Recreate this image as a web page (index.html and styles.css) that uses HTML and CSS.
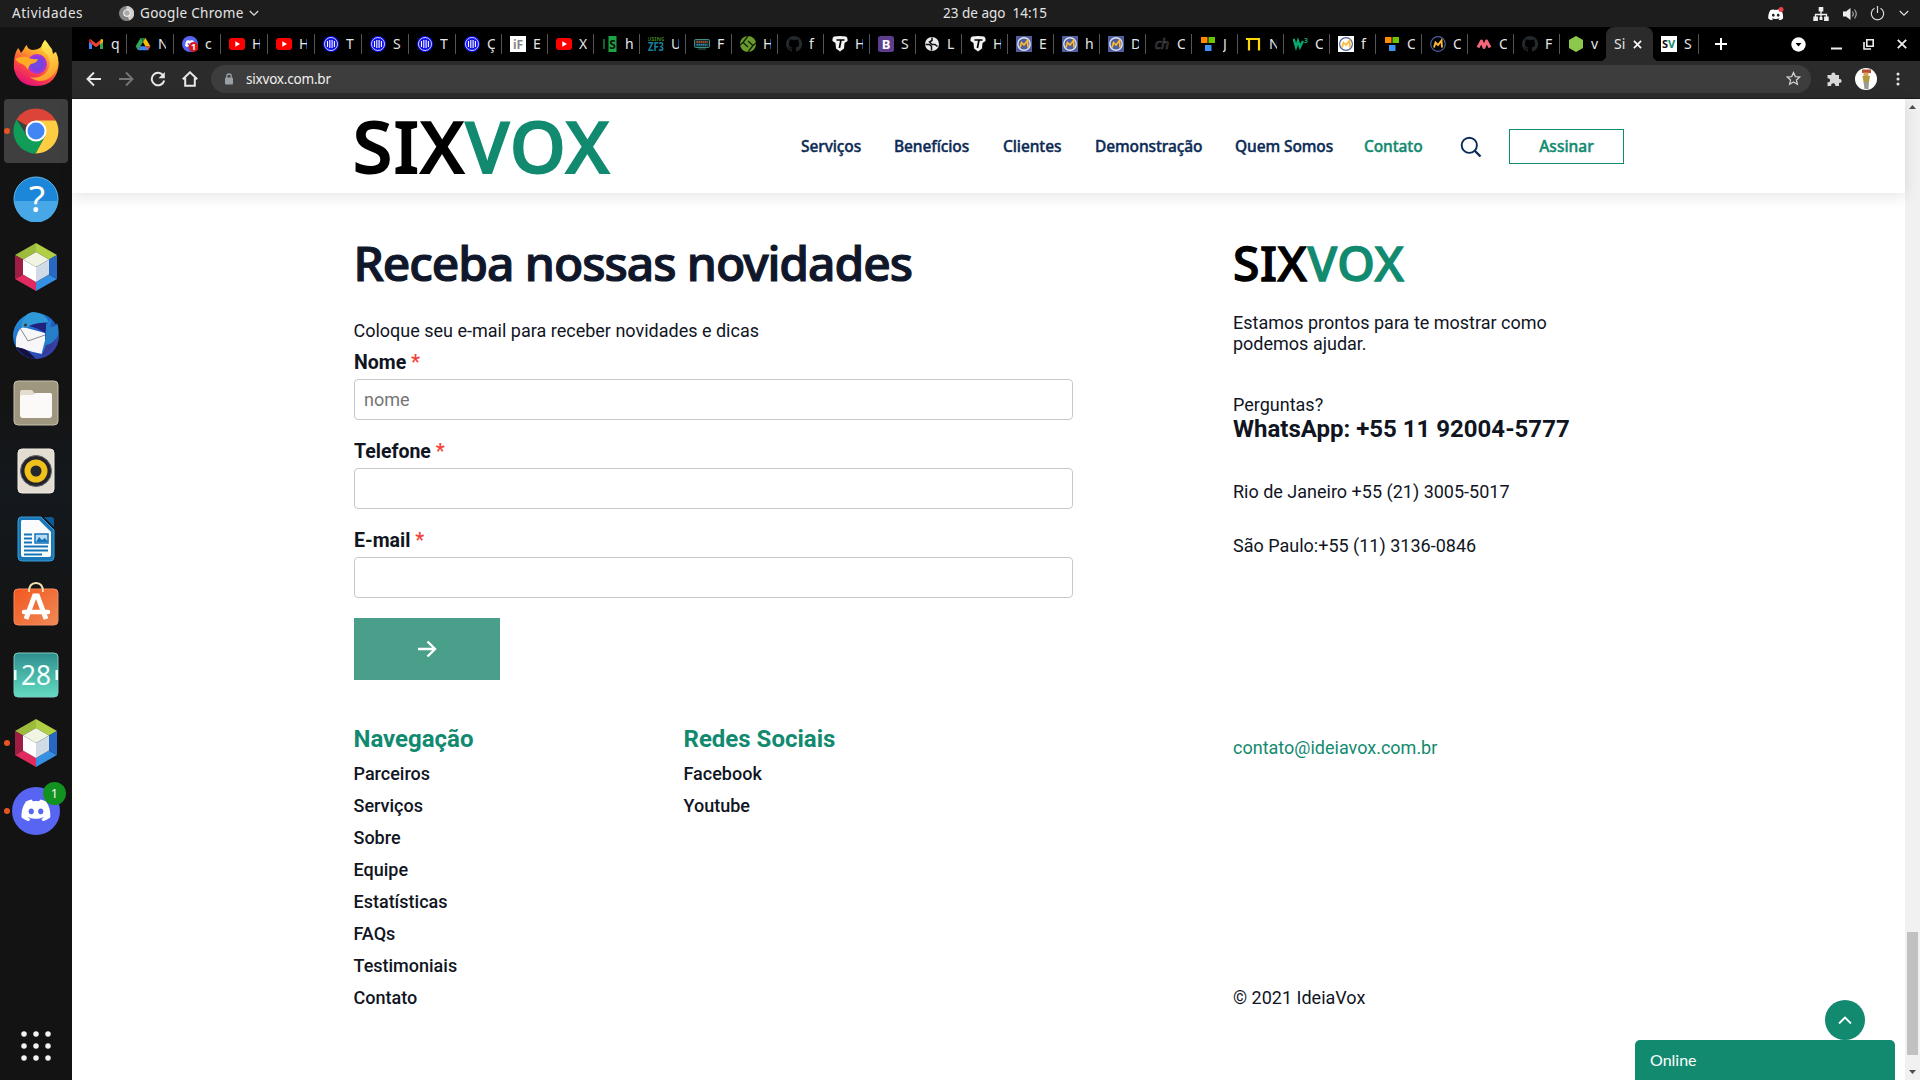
FILE: index.html
```html
<!DOCTYPE html>
<html lang="pt-BR">
<head>
<meta charset="utf-8">
<title>SIXVOX</title>
<link rel="stylesheet" href="styles.css">
</head>
<body>
<svg class="defs" width="0" height="0" aria-hidden="true">
  <defs>
    <linearGradient id="ff" x1="0.8" y1="0" x2="0.3" y2="1"><stop offset="0" stop-color="#fff44f"/><stop offset=".35" stop-color="#ffa72b"/><stop offset=".65" stop-color="#ff4b3e"/><stop offset="1" stop-color="#e20d7b"/></linearGradient>
    <linearGradient id="ffy" x1="0.5" y1="0" x2="0.7" y2="1"><stop offset="0" stop-color="#fff25a"/><stop offset="1" stop-color="#ff9a26"/></linearGradient>
    <radialGradient id="ffp"><stop offset="0" stop-color="#6a4fe0"/><stop offset=".6" stop-color="#7c3fe0"/><stop offset="1" stop-color="#b833c9"/></radialGradient>
    <linearGradient id="teal" x1="0" y1="0" x2="0" y2="1"><stop offset="0" stop-color="#2e8f8e"/><stop offset="1" stop-color="#63dbc1"/></linearGradient>
    <linearGradient id="bird" x1="0" y1="0" x2="1" y2="1"><stop offset="0" stop-color="#2a9be0"/><stop offset=".5" stop-color="#1e5fc4"/><stop offset="1" stop-color="#41309a"/></linearGradient>
    <linearGradient id="bag" x1="0" y1="0" x2="1" y2="1"><stop offset="0" stop-color="#f2571f"/><stop offset="1" stop-color="#f08a56"/></linearGradient>
  </defs>
  <symbol id="gmail" viewBox="0 0 16 16"><path d="M1 4v9h3V7z" fill="#4285f4"/><path d="M15 4v9h-3V7z" fill="#34a853"/><path d="M1 3.500V6l3 2.300V4.600L2.600 3z" fill="#c5221f"/><path d="M15 3.500V6l-3 2.300V4.600L13.400 3z" fill="#fbbc04"/><path d="M3 3.600l5 3.800 5-3.800-1 4.700-4 3-4-3z" fill="#ea4335"/></symbol>
  <symbol id="drive" viewBox="0 0 16 16"><path d="M5.500 2h5L8 6.300z" fill="#188038"/><path d="M5.500 2L0.700 10.300 3 14.300 8 6z" fill="#34a853"/><path d="M10.500 2l4.900 8.300H10.400L8 6z" fill="#fbbc04"/><path d="M5.300 10.300h10.100L13 14.300H3z" fill="#4285f4"/><path d="M10.400 10.300h5L13 14.300z" fill="#ea4335"/></symbol>
  <symbol id="discface" viewBox="0 0 24 18"><path d="M20 1.700A19 19 0 0 0 15.200.2l-.6 1.300a18 18 0 0 0-5.300 0L8.700.2A19 19 0 0 0 3.900 1.700C1 6 .1 10.300.4 14.600A19 19 0 0 0 6.300 17.600l1.300-2c-.7-.2-1.300-.5-1.900-.9l.5-.4c3.700 1.700 7.700 1.700 11.400 0l.5.4c-.6.4-1.200.7-1.900.9l1.300 2a19 19 0 0 0 5.900-3C23.800 9.600 22.700 5.400 20 1.700zM8.200 12C7 12 6.100 11 6.100 9.700S7 7.400 8.200 7.400s2.100 1 2.100 2.300S9.400 12 8.200 12zm7.600 0c-1.200 0-2.100-1-2.100-2.300s.9-2.300 2.100-2.300 2.100 1 2.100 2.300S17 12 15.800 12z" fill="#fff"/></symbol>
  <symbol id="yt" viewBox="0 0 16 16"><rect y="2" width="16" height="12" rx="3" fill="#f00"/><path d="M6.300 5.300v5.400L11 8z" fill="#fff"/></symbol>
  <symbol id="columns" viewBox="0 0 16 16"><circle cx="8" cy="8" r="8" fill="#1010e8"/><circle cx="8" cy="8" r="6.500" fill="none" stroke="#fff" stroke-width=".8"/><path d="M4.500 5v6M6.800 4v8M9.100 4v8M11.400 5v6" stroke="#fff" stroke-width="1.100"/></symbol>
  <symbol id="chip" viewBox="0 0 16 16"><rect x=".5" y="3.500" width="15" height="8" rx="1" fill="#172c2c" stroke="#3f8f80"/><path d="M2.500 6h11" stroke="#d0562e" stroke-width="1.500" stroke-dasharray="1.500 .5"/><path d="M2.500 8.800h11" stroke="#398ec0" stroke-width="1.500" stroke-dasharray="1.500 .5"/><path d="M4 13h8" stroke="#2c6a60"/></symbol>
  <symbol id="greenball" viewBox="0 0 16 16"><circle cx="8" cy="8" r="8" fill="#6a9a2c"/><path d="M8 0L3 6.500 8 11M8 16l5-6.500L8 5M0 9l3-2.500M16 7l-3 2.500" stroke="#101a08" stroke-width="1.300" fill="none"/></symbol>
  <symbol id="github" viewBox="0 0 16 16"><path fill="#24292e" d="M8 0a8 8 0 0 0-2.500 15.600c.4.100.5-.2.500-.4v-1.500c-2.200.5-2.700-.9-2.700-.9-.4-.9-.9-1.200-.9-1.200-.7-.5.100-.5.100-.5.800.1 1.200.8 1.200.8.700 1.200 1.900.9 2.300.7.100-.5.300-.9.500-1.100-1.800-.2-3.600-.9-3.600-4 0-.9.300-1.600.8-2.100-.1-.2-.4-1 .1-2.100 0 0 .7-.2 2.200.8a7.600 7.600 0 0 1 4 0c1.500-1 2.200-.8 2.200-.8.400 1.100.200 1.900.1 2.100.5.600.8 1.300.8 2.100 0 3.100-1.900 3.800-3.700 4 .3.200.6.700.6 1.500v2.200c0 .2.100.5.600.4A8 8 0 0 0 8 0z"/></symbol>
  <symbol id="tshield" viewBox="0 0 16 16"><path d="M2 .5Q8-.5 14 .5q2 1 1.500 4.500L12.500 7 12 12.500 8 15.500l-4-3L3.500 7 .5 5Q0 1.500 2 .5z" fill="#f3f3f3"/><path d="M4.500 4h8M9 4l-1.600 8" stroke="#000" stroke-width="1.700"/></symbol>
  <symbol id="globe" viewBox="0 0 16 16"><circle cx="8" cy="8" r="7" fill="#e8eaed"/><path d="M1.500 8.500h4l2 2v4M8 1.500v3L5.500 6 8 8.500h3l2.500 2" stroke="#111" stroke-width="1.500" fill="none"/></symbol>
  <symbol id="mau" viewBox="0 0 16 16"><rect width="16" height="16" fill="#4e5e9e"/><circle cx="8" cy="8" r="6.200" fill="none" stroke="#dfe3f0" stroke-width="1.400"/><path d="M4 11.500l1.500-5L8 9l3.500-4.500.5 7" stroke="#fdb933" stroke-width="1.700" fill="none"/></symbol>
  <symbol id="mauw" viewBox="0 0 16 16"><rect width="16" height="16" fill="#fff"/><circle cx="8" cy="8" r="6.400" fill="none" stroke="#4e5e9e" stroke-width="1.200"/><path d="M4 11.500l1.500-5L8 9l3.500-4.500.5 7" stroke="#fdb933" stroke-width="1.700" fill="none"/></symbol>
  <symbol id="maub" viewBox="0 0 16 16"><circle cx="8" cy="8" r="7.300" fill="none" stroke="#4e5e9e" stroke-width="1.200"/><path d="M4 11.500l1.500-5L8 9l3.500-4.500.5 7" stroke="#fdb933" stroke-width="1.900" fill="none"/></symbol>
  <symbol id="squares" viewBox="0 0 16 16"><path d="M1 1h6.500v6H1z" fill="#ff8a00"/><path d="M8.500 1H15v6H8.500z" fill="#6ec400"/><path d="M5 9h6.500v6H5z" fill="#3d94f6"/></symbol>
  <symbol id="gate" viewBox="0 0 16 16"><path d="M0 3h14M3 3v11.500M13 2v12.500" stroke="#ffd60a" stroke-width="2.200" fill="none"/></symbol>
  <symbol id="mm" viewBox="0 0 16 16"><path d="M2 11.500L5.500 5l2.500 6.500L10.500 5l3.500 6.500" stroke="#f2657a" stroke-width="3" fill="none" stroke-linejoin="round"/></symbol>
  <symbol id="hex" viewBox="0 0 16 16"><path d="M8 0l7 4v8l-7 4-7-4V4z" fill="#8cc84b"/></symbol>
  <symbol id="netbeans" viewBox="0 0 48 48"><path d="M24 0l21 12-8 4.500L24 9z" fill="#b0cf45"/><path d="M24 0L3 12l8 4.500L24 9z" fill="#9dbb3c"/><path d="M3 12l8 4.500v15L3 36z" fill="#9d1d45"/><path d="M3 36l8-4.500L24 39v9z" fill="#e02a60"/><path d="M24 48v-9l13-7.500 8 4.500z" fill="#3590e4"/><path d="M45 12v24l-8-4.500v-15z" fill="#2768c4"/><path d="M24 9l13 7.500L24 24l-13-7.500z" fill="#f0f4e2"/><path d="M11 16.500L24 24v15l-13-7.500z" fill="#fff"/><path d="M37 16.500L24 24v15l13-7.500z" fill="#d0dbe7"/></symbol>
</svg>

<div class="desktop">
  <header class="topbar">
    <span class="activities">Atividades</span>
    <div class="appmenu">
      <svg width="15" height="15" viewBox="0 0 16 16"><circle cx="8" cy="8" r="8" fill="#858585"/><path d="M8 8L8 0a8 8 0 0 1 3 15.500z" fill="#d0d0d0"/><circle cx="8.500" cy="7.500" r="3.500" fill="#aaa" stroke="#f0f0f0" stroke-width="1.200"/></svg>
      <span class="appname">Google Chrome</span>
      <svg width="10" height="7" viewBox="0 0 10 7"><path d="M.8 1l4.200 4.200L9.200 1" fill="none" stroke="#ddd" stroke-width="1.300"/></svg>
    </div>
    <span class="clock">23 de ago&nbsp; 14:15</span>
    <div class="tray">
      <svg class="tray-disc" width="17" height="14" viewBox="0 0 17 14"><use href="#discface" y="2" width="15.500" height="11.600"/><circle cx="13" cy="2.500" r="2.500" fill="#ed4245"/></svg>
      <svg width="16" height="14" viewBox="0 0 16 14"><path d="M8 3v8M2.500 11V7.500h11V11" stroke="#eee" fill="none" stroke-width="1.300"/><path d="M5.700 0h4.600v4.500H5.700zM.3 9.500h4.600V14H.3zM11.100 9.500h4.600V14h-4.600zM6.500 10h3v3h-3z" fill="#eee"/></svg>
      <svg width="15" height="14" viewBox="0 0 15 14"><path d="M0 4.500h3L7.500 1v12L3 9.500H0z" fill="#eee"/><path d="M9.300 4.500q2 2.500 0 5M11.500 2.500q3.500 4.500 0 9" stroke="#aaa" fill="none" stroke-width="1.200"/></svg>
      <svg class="power" width="15" height="15" viewBox="0 0 15 15"><path d="M4.500 2.300a6.200 6.200 0 1 0 6 0M7.500 0v7" stroke="#ddd" fill="none" stroke-width="1.200"/></svg>
      <svg width="10" height="7" viewBox="0 0 10 7"><path d="M.8 1l4.200 4.200L9.200 1" fill="none" stroke="#ddd" stroke-width="1.300"/></svg>
    </div>
  </header>

  <div class="workspace">
    <aside class="dock">
      <div class="app"><svg width="46" height="48" viewBox="0 0 46 48"><path d="M5 9q2 2 3 5l3-4q1-3 3-4 0 4 5 5 6 0 9-3Q30 3 32 1q3 6 7 9l1 5 3-2q4 8 2 17-4 17-22 17T1 30Q0 17 5 9z" fill="url(#ff)"/><path d="M32 1q-4 6-3 10 7 4 8 13-1 8-7 12-6 4-13 2 9 7 18 2 9-5 10-16 0-7-3-11l-2 3Q38 7 32 1z" fill="url(#ffy)"/><circle cx="24" cy="25" r="10" fill="url(#ffp)"/><path d="M2 20q6-3 12-2 5 3 11 2-1 4-7 5-2 1-3 6-3-6-9-7z" fill="#ffab25"/></svg></div>
      <div class="app active running"><svg width="46" height="46" viewBox="0 0 46 46"><path d="M23 23L3.500 11.500A22.500 22.500 0 0 1 42.500 12z" fill="#dc4437"/><path d="M23 12.500h19.800A22.500 22.500 0 0 1 22.500 45.500L32 28z" fill="#ffcd42"/><path d="M3.600 11.500A22.500 22.500 0 0 0 22.500 45.500L32 28.500 14 28z" fill="#0f9d58"/><circle cx="23" cy="23" r="10.500" fill="#fff"/><circle cx="23" cy="23" r="8.500" fill="#4285f4"/></svg></div>
      <div class="app"><svg width="46" height="46" viewBox="0 0 46 46"><circle cx="23" cy="23" r="22" fill="#1c86d8" stroke="#62b7ee"/><path d="M1.500 25h43a21.500 21.500 0 0 1-43 0z" fill="#48a7e6"/><text x="24" y="36" font-size="37" fill="#fff" text-anchor="middle">?</text></svg></div>
      <div class="app"><svg width="48" height="48"><use href="#netbeans"/></svg></div>
      <div class="app"><svg width="48" height="48" viewBox="0 0 48 48"><circle cx="24" cy="25" r="23" fill="url(#bird)"/><path d="M4 36q-1-12 4-18l3-2 22 6v11l-3 10-9-2z" fill="#f7f7fa"/><path d="M8 17l8 13 17-6" fill="none" stroke="#888" stroke-width="1"/><path d="M9 15Q12 1 22 1q11 1 15 10-12 1-19 4-6 4-9 0z" fill="#2e9bd8"/><path d="M17 15q10-4 18-3l-2 10q-7-5-16-7z" fill="#23217e"/><path d="M34 13q4-2 5-6 1 5-1 9 6 0 7-4 3 8 0 15-2 9-10 14l-6 4 3-12q3-8 2-20z" fill="#267fc9"/><path d="M34 34q7-1 11-8-2 10-9 15l-7 5z" fill="#353a9c"/><path d="M4 36q8 1 12 4l5 5 3 3Q11 47 4 36z" fill="#150f43"/><circle cx="13.500" cy="14" r="1.500" fill="#4a2c20"/></svg></div>
      <div class="app"><svg width="46" height="46" viewBox="0 0 46 46"><rect x="1" y="1" width="44" height="44" rx="4" fill="#9f967f" stroke="#c8c1ad"/><path d="M7 12q0-2 2-2h9q2 0 3 3h16q2 0 2 2v10H7z" fill="#e2ddd0"/><path d="M7 17q0-2 2-2h11l3-2h14q2 0 2 2v20q0 3-3 3H10q-3 0-3-3z" fill="#fbfaf8"/></svg></div>
      <div class="app"><svg width="38" height="46" viewBox="0 0 38 46"><rect x="1" y="1" width="36" height="44" rx="4" fill="#e3ddd1" stroke="#f0ece4"/><circle cx="19" cy="23" r="15.500" fill="#23242b" stroke="#66676d"/><circle cx="19" cy="23" r="11.500" fill="#f0c01b"/><circle cx="19" cy="23" r="5.500" fill="#25282c"/></svg></div>
      <div class="app"><svg width="38" height="46" viewBox="0 0 38 46"><path d="M4 1h20l13 13v27q0 4-4 4H5q-4 0-4-4V5q0-4 3-4z" fill="#1878b8" stroke="#3b9bd6"/><path d="M5 4h17l12 12v23q0 2-2 2H6q-2 0-2-2V6q0-2 1-2z" fill="#fbfbfb"/><path d="M27 1h7q3 0 3 3v7z" fill="#0c5c93"/><path d="M7 18.500h8M7 22.500h8M7 26.500h8M7 30.500h24M7 34.500h24M7 38.500h18" stroke="#1474b8" stroke-width="2"/><rect x="18" y="18" width="13" height="9" fill="#b7dcf2" stroke="#1474b8" stroke-width="1.500"/><path d="M19 26l3-5 3 3 3-2 3 4z" fill="#1474b8"/></svg></div>
      <div class="app bag"><svg width="46" height="46" viewBox="0 0 46 46"><rect x="1" y="7" width="44" height="36" rx="4" fill="url(#bag)" stroke="#f58a60"/><path d="M16 10q0-9 7-9t7 9" fill="none" stroke="#f4dfae" stroke-width="2"/><path d="M13 37L21.500 14h3l8.500 23" fill="none" stroke="#fff" stroke-width="5"/><path d="M11 30h24" stroke="#fff" stroke-width="4.500" stroke-linecap="round"/></svg></div>
      <div class="app"><svg width="46" height="46" viewBox="0 0 46 46"><rect x="1" y="1" width="44" height="44" rx="4" fill="url(#teal)" stroke="#7cc9bf"/><path d="M1 18h2.500v10H1zM42.500 18H45v10h-2.500z" fill="#e8fffa"/><text x="23" y="33" font-size="28" fill="#f3fffc" text-anchor="middle" textLength="30" lengthAdjust="spacingAndGlyphs">28</text></svg></div>
      <div class="app running"><svg width="48" height="48"><use href="#netbeans"/></svg></div>
      <div class="app running"><svg width="48" height="48" viewBox="0 0 48 48"><circle cx="24" cy="24" r="24" fill="#5865f2"/><use href="#discface" x="9" y="12" width="30" height="23"/></svg><span class="badge">1</span></div>
      <svg class="grid" width="30" height="30" viewBox="0 0 30 30"><path d="M3 3h.01M15 3h.01M27 3h.01M3 15h.01M15 15h.01M27 15h.01M3 27h.01M15 27h.01M27 27h.01" stroke="#f2f2f2" stroke-width="5.500" stroke-linecap="round"/></svg>
    </aside>

    <div class="browser">
      <div class="tabstrip">
        <div class="tab wide"><svg><use href="#gmail"/></svg><span>q</span></div>
        <div class="tab wide"><svg><use href="#drive"/></svg><span>N</span></div>
        <div class="tab wide"><svg viewBox="0 0 16 16"><circle cx="8" cy="8" r="8" fill="#5865f2"/><use href="#discface" x="3" y="4" width="10" height="7.500"/><circle cx="11.500" cy="11" r="5" fill="#d8191f"/><text x="11.500" y="14.300" font-size="9" font-weight="700" fill="#fff" text-anchor="middle">1</text></svg><span>c</span></div>
        <div class="tab wide"><svg><use href="#yt"/></svg><span>H</span></div>
        <div class="tab wide"><svg><use href="#yt"/></svg><span>H</span></div>
        <div class="tab wide"><svg><use href="#columns"/></svg><span>T</span></div>
        <div class="tab wide"><svg><use href="#columns"/></svg><span>S</span></div>
        <div class="tab wide"><svg><use href="#columns"/></svg><span>T</span></div>
        <div class="tab"><svg><use href="#columns"/></svg><span>Ç</span></div>
        <div class="tab"><svg viewBox="0 0 16 16"><rect width="16" height="16" fill="#fff"/><text x="8" y="12.500" font-size="12" font-weight="700" fill="#888" text-anchor="middle">iF</text></svg><span>E</span></div>
        <div class="tab"><svg><use href="#yt"/></svg><span>X</span></div>
        <div class="tab"><svg viewBox="0 0 16 16"><path d="M2 3v10" stroke="#16843a" stroke-width="1.500"/><rect x="6.500" width="8" height="16" fill="#1ea446"/><text x="10.500" y="13" font-size="12" font-weight="700" fill="#111" text-anchor="middle">S</text></svg><span>h</span></div>
        <div class="tab"><svg viewBox="0 0 16 16"><text x="8" y="4.800" font-size="5.500" font-weight="700" fill="#3f7d1b" text-anchor="middle">USING</text><text x="8" y="15.300" font-size="13" font-weight="700" fill="#16809f" text-anchor="middle" textLength="16" lengthAdjust="spacingAndGlyphs">ZF3</text></svg><span>U</span></div>
        <div class="tab"><svg><use href="#chip"/></svg><span>F</span></div>
        <div class="tab"><svg><use href="#greenball"/></svg><span>H</span></div>
        <div class="tab"><svg><use href="#github"/></svg><span>f</span></div>
        <div class="tab"><svg><use href="#tshield"/></svg><span>H</span></div>
        <div class="tab"><svg viewBox="0 0 16 16"><rect width="16" height="16" rx="2.500" fill="#5d3d8c"/><text x="8" y="12.700" font-size="13" font-weight="700" fill="#fff" text-anchor="middle">B</text></svg><span>S</span></div>
        <div class="tab"><svg><use href="#globe"/></svg><span>L</span></div>
        <div class="tab"><svg><use href="#tshield"/></svg><span>H</span></div>
        <div class="tab"><svg><use href="#mau"/></svg><span>E</span></div>
        <div class="tab"><svg><use href="#mau"/></svg><span>h</span></div>
        <div class="tab"><svg><use href="#mau"/></svg><span>D</span></div>
        <div class="tab"><svg viewBox="0 0 16 16"><text x="8" y="13" font-size="14" font-style="italic" fill="none" stroke="#484848" stroke-width=".7" text-anchor="middle">ch</text></svg><span>C</span></div>
        <div class="tab"><svg><use href="#squares"/></svg><span>J</span></div>
        <div class="tab"><svg><use href="#gate"/></svg><span>N</span></div>
        <div class="tab"><svg viewBox="0 0 16 16"><path d="M1 4h1l2 7 2-6 2 6 3-6" stroke="#04aa6d" stroke-width="2.400" fill="none"/><text x="12" y="7" font-size="7" font-weight="700" fill="#04aa6d">3</text></svg><span>C</span></div>
        <div class="tab"><svg><use href="#mauw"/></svg><span>f</span></div>
        <div class="tab"><svg><use href="#squares"/></svg><span>C</span></div>
        <div class="tab"><svg><use href="#maub"/></svg><span>C</span></div>
        <div class="tab"><svg><use href="#mm"/></svg><span>C</span></div>
        <div class="tab"><svg><use href="#github"/></svg><span>F</span></div>
        <div class="tab last"><svg><use href="#hex"/></svg><span>v</span></div>
        <div class="tab current"><span>Si</span><svg class="close" viewBox="0 0 10 10"><path d="M1 1l8 8M9 1L1 9" stroke="#fff" stroke-width="1.800"/></svg></div>
        <div class="tab"><svg viewBox="0 0 16 16"><rect width="16" height="16" fill="#fff"/><text x="1" y="12.300" font-size="11" font-weight="700" fill="#111">S<tspan fill="#118a70">V</tspan></text></svg><span>S</span></div>
        <svg class="plus" viewBox="0 0 12 12"><path d="M6 0v12M0 6h12" stroke="#fff" stroke-width="2"/></svg>
        <div class="winbtns">
          <svg width="15" height="15" viewBox="0 0 15 15"><circle cx="7.500" cy="7.500" r="7.200" fill="#fff"/><path d="M4.500 6h6l-3 3.500z" fill="#000"/></svg>
          <svg width="11" height="15" viewBox="0 0 11 15"><path d="M0 11.500h11" stroke="#eee" stroke-width="2"/></svg>
          <svg width="11" height="11" viewBox="0 0 11 11"><path d="M3.800.8h6.400v6.400H3.800zM1 3v7h7" fill="none" stroke="#eee" stroke-width="1.600"/></svg>
          <svg width="10" height="10" viewBox="0 0 10 10"><path d="M.8.8l8.400 8.400M9.200.8L.8 9.200" stroke="#eee" stroke-width="1.800"/></svg>
        </div>
      </div>

      <div class="toolbar">
        <svg width="16" height="16" viewBox="0 0 16 16"><path d="M15 8H2M8 1.500L1.500 8 8 14.500" fill="none" stroke="#e8e8e8" stroke-width="1.900"/></svg>
        <svg width="16" height="16" viewBox="0 0 16 16"><path d="M1 8h13M8 1.500L14.500 8 8 14.500" fill="none" stroke="#757575" stroke-width="1.900"/></svg>
        <svg width="16" height="16" viewBox="0 0 16 16"><path d="M13.300 4.500A6.300 6.300 0 1 0 14.200 9.500" fill="none" stroke="#e8e8e8" stroke-width="2"/><path d="M14.800 1v6.300H8.500z" fill="#e8e8e8"/></svg>
        <svg width="18" height="16" viewBox="0 0 18 16"><path d="M1.800 8.200L9 1.300l7.200 6.900M4.200 7v7.800h9.600V7" fill="none" stroke="#e8e8e8" stroke-width="2"/></svg>
        <div class="omnibox">
          <svg width="10" height="12" viewBox="0 0 10 12"><rect x="1" y="4.500" width="8" height="7" rx="1" fill="#9aa0a6"/><path d="M2.800 5V3.200a2.200 2.200 0 0 1 4.400 0V5" fill="none" stroke="#9aa0a6" stroke-width="1.300"/></svg>
          <span class="url">sixvox.com.br</span>
          <svg width="15" height="15" viewBox="0 0 24 24"><path d="M12 2.500l2.900 6.400 7 .7-5.200 4.700 1.500 6.900L12 17.600l-6.200 3.600 1.500-6.900L2.100 9.600l7-.7z" fill="none" stroke="#d0d0d0" stroke-width="2"/></svg>
        </div>
        <svg class="ext" width="16" height="16" viewBox="0 0 16 16"><path d="M1.500 4h4a2 2 0 1 1 3.800 0H13v4a2 2 0 1 1 0 3.800V15H9.200a2.100 2.100 0 1 0-4 0H1.500v-3.800a2 2 0 1 0 0-3.800z" fill="#d8d8d8"/></svg>
        <svg width="22" height="22" viewBox="0 0 22 22"><circle cx="11" cy="11" r="11" fill="#fff"/><path d="M7 1.500h9V5H7z" fill="#b5522e"/><path d="M8.500 4.500h5V8h-5z" fill="#d9a060"/><path d="M7.500 8h7.500l-1 6H8.500z" fill="#b09c3d"/><path d="M8.500 14H14l-.5 7h-4z" fill="#9a9a94"/></svg>
        <svg class="dots" width="4" height="14" viewBox="0 0 4 14"><path d="M2 2h.01M2 7h.01M2 12h.01" stroke="#e8e8e8" stroke-width="3" stroke-linecap="round"/></svg>
      </div>

      <div class="viewport">
        <div class="site">
          <div class="sitehead">
            <div class="logo">SIX<span>VOX</span></div>
            <nav class="menu">
              <a class="m1">Serviços</a><a class="m2">Benefícios</a><a class="m3">Clientes</a><a class="m4">Demonstração</a><a class="m5">Quem Somos</a><a class="m6 on">Contato</a>
            </nav>
            <svg class="search" width="22" height="22" viewBox="0 0 22 22"><circle cx="9.300" cy="9.300" r="7.600" fill="none" stroke="#0b2a55" stroke-width="1.900"/><path d="M14.500 14.500l6 6" stroke="#0b2a55" stroke-width="2.400"/></svg>
            <a class="subscribe">Assinar</a>
          </div>

          <main class="content">
            <section class="news">
              <h1>Receba nossas novidades</h1>
              <p class="lead">Coloque seu e-mail para receber novidades e dicas</p>
              <form>
                <label>Nome <i>*</i></label>
                <input type="text" placeholder="nome">
                <label>Telefone <i>*</i></label>
                <input type="text">
                <label>E-mail <i>*</i></label>
                <input type="text">
                <button type="button" aria-label="Enviar"><svg width="20" height="18" viewBox="0 0 20 18"><path d="M1 9h17M10.500 1.500L18 9l-7.500 7.500" fill="none" stroke="#fff" stroke-width="2.400"/></svg></button>
              </form>
              <div class="links">
                <div><h2>Navegação</h2><ul><li>Parceiros</li><li>Serviços</li><li>Sobre</li><li>Equipe</li><li>Estatísticas</li><li>FAQs</li><li>Testimoniais</li><li>Contato</li></ul></div>
                <div><h2>Redes Sociais</h2><ul><li>Facebook</li><li>Youtube</li></ul></div>
              </div>
            </section>
            <section class="info">
              <div class="logo small">SIX<span>VOX</span></div>
              <p class="ready">Estamos prontos para te mostrar como podemos ajudar.</p>
              <p class="ask">Perguntas?</p>
              <p class="whats">WhatsApp: +55 11 92004-5777</p>
              <p class="rio">Rio de Janeiro +55 (21) 3005-5017</p>
              <p class="sp">São Paulo:+55 (11) 3136-0846</p>
              <p class="mail">contato@ideiavox.com.br</p>
              <p class="copy">© 2021 IdeiaVox</p>
            </section>
          </main>
          <div class="totop"><svg width="14" height="9" viewBox="0 0 14 9"><path d="M1 7.500l6-6 6 6" fill="none" stroke="#fff" stroke-width="1.800"/></svg></div>
          <div class="chat">Online</div>
        </div>
        <div class="scrollbar">
          <svg width="7" height="4" viewBox="0 0 7 4"><path d="M0 4l3.500-4L7 4z" fill="#505050"/></svg>
          <div class="thumb"></div>
          <svg width="7" height="4" viewBox="0 0 7 4"><path d="M0 0l3.500 4L7 0z" fill="#505050"/></svg>
        </div>
      </div>
    </div>
  </div>
</div>
</body>
</html>
```
FILE: styles.css
```css
* { box-sizing: border-box; }
body, h1, h2, p, ul { margin: 0; padding: 0; }
body { width: 1920px; height: 1080px; overflow: hidden; font-family: Roboto, "Liberation Sans", sans-serif; color: #10151f; }
.defs { position: absolute; }
svg { display: block; flex: none; }
svg text { font-family: "Noto Sans", sans-serif; }
.desktop { display: flex; flex-direction: column; height: 1080px; background: #131313; }

/* system bar */
.topbar { display: flex; align-items: center; height: 27px; background: #1d1d1d; color: #e4e4e4; font: 13.500px/27px "Noto Sans", sans-serif; white-space: nowrap; }
.activities { width: 107px; padding-left: 12px; letter-spacing: .55px; }
.appmenu { display: flex; align-items: center; width: 836px; padding-left: 12px; }
.appname { width: 104px; margin: 0 5px 0 6px; letter-spacing: .3px; }
.clock { width: 825px; }
.tray { display: flex; align-items: center; gap: 14px; }
.tray-disc { margin-right: 14px; }
.power { margin-left: -2px; }

/* launcher */
.workspace { display: flex; flex: 1; min-height: 0; }
.dock { display: flex; flex-direction: column; align-items: center; gap: 4px; width: 72px; padding: 4px 0 19px; background: linear-gradient(#131313 35%, #14191e 44%, #131313 58%); }
.app { position: relative; display: flex; align-items: center; justify-content: center; flex: none; width: 64px; height: 64px; border-radius: 4px; }
.app.active { background: #3f3f3f; }
.app.bag { padding-bottom: 4px; }
.app.running::before { content: ""; position: absolute; left: 0; top: 29px; width: 6px; height: 6px; border-radius: 50%; background: #e95420; }
.badge { position: absolute; left: 39px; top: 3px; width: 23px; height: 23px; border-radius: 50%; background: #12921f; color: #fff; font: 12px/23px "Noto Sans", sans-serif; text-align: center; }
.grid { margin-top: auto; }

/* browser chrome */
.browser { display: flex; flex-direction: column; flex: 1; min-width: 0; }
.tabstrip { display: flex; align-items: center; height: 34px; padding-left: 8px; background: #000; color: #e6e6e6; font: 14px/20px "Noto Sans", sans-serif; }
.tab { display: flex; align-items: center; gap: 7px; flex: none; width: 46px; height: 20px; padding-left: 8px; border-right: 1px solid #555; }
.tab.wide { width: 47px; }
.tab svg { width: 16px; height: 16px; overflow: hidden; }
.tab span { width: 8px; overflow: hidden; }
.tab.last { border-right-color: transparent; }
.tab.current { position: relative; width: 47px; height: 34px; gap: 6px; border: 0; border-radius: 8px 8px 0 0; background: #2b2b2b; }
.tab.current::before, .tab.current::after { content: ""; position: absolute; bottom: 0; width: 6px; height: 6px; }
.tab.current::before { left: -6px; background: radial-gradient(circle at 0 0, transparent 6px, #2b2b2b 6.500px); }
.tab.current::after { right: -6px; background: radial-gradient(circle at 100% 0, transparent 6px, #2b2b2b 6.500px); }
.tab.current span { width: 13px; }
.tab.current svg { width: 9px; height: 9px; }
.plus { width: 12px; height: 12px; margin-left: 16px; }
.winbtns { display: flex; align-items: center; margin-left: auto; padding-right: 13px; }
.winbtns svg:nth-child(1) { margin-right: 25px; }
.winbtns svg:nth-child(2) { margin-right: 21px; }
.winbtns svg:nth-child(3) { margin-right: 23px; }
.toolbar { display: flex; align-items: center; gap: 16px; height: 38px; padding: 0 0 2px 14px; border-bottom: 1px solid #1c1c1c; background: #2b2b2b; }
.toolbar > svg:nth-child(4) { margin-left: -1px; }
.omnibox { display: flex; align-items: center; width: 1600px; height: 28px; margin-left: -4px; padding: 0 10px 0 13px; border-radius: 14px; background: #3d3d3d; }
.url { flex: 1; margin-left: 12px; color: #f0f0f0; font: 13.500px/28px "Noto Sans", sans-serif; letter-spacing: -.2px; }
.ext { margin: 0 -3px 0 -1px; }
.dots { margin-left: 3px; }

/* page */
.viewport { display: flex; flex: 1; min-height: 0; }
.site { position: relative; flex: 1; background: #fff; }
.sitehead { display: flex; align-items: center; height: 94px; padding-left: 281px; box-shadow: 0 3px 14px rgba(0,0,0,.11); font-family: "Noto Sans", sans-serif; }
.logo { width: 448px; padding-bottom: 1px; color: #000; font: 500 71px/93px "Noto Sans", sans-serif; letter-spacing: 1.600px; -webkit-text-stroke: 2px; }
.logo span { color: #118a70; }
.menu { display: flex; color: #0b2a55; font-size: 15.500px; font-weight: 500; letter-spacing: -.1px; white-space: nowrap; -webkit-text-stroke: .4px; }
.m1 { width: 93px; } .m2 { width: 109px; } .m3 { width: 92px; } .m4 { width: 140px; } .m5 { width: 129px; } .m6 { width: 96px; }
.on { color: #118a70; }
.search { margin: 1px 27px 0 0; }
.subscribe { width: 115px; height: 35px; border: 1px solid #118a70; color: #118a70; font-size: 15.500px; font-weight: 500; line-height: 32px; text-align: center; -webkit-text-stroke: .4px; }

.content { display: flex; padding: 31px 0 0 281.500px; }
.news { width: 880px; }
h1 { color: #10172a; font: 500 48px/78px "Noto Sans", sans-serif; letter-spacing: -1.050px; white-space: nowrap; -webkit-text-stroke: 1.200px; }
.lead { margin-top: 18px; font-size: 18px; line-height: 21px; }
form { display: flex; flex-direction: column; width: 719px; margin-left: .5px; }
label { height: 38px; padding-top: 10px; font-size: 19.500px; font-weight: 700; line-height: 24px; }
label i { color: #f44336; font-style: normal; }
input { height: 41px; margin-bottom: 10px; padding: 0 9px; border: 1px solid #c8c8c8; border-radius: 4px; font: 18px Roboto, sans-serif; outline: none; }
input::placeholder { color: #757575; }
button { display: flex; align-items: center; justify-content: center; width: 146px; height: 62px; margin-top: 10px; padding: 0; border: 0; background: #499f8a; }
.links { display: flex; margin-top: 44px; }
.links > div { width: 330px; }
h2 { color: #118a70; font-size: 24px; font-weight: 700; line-height: 30px; }
ul { padding-top: 4px; list-style: none; font-size: 18px; font-weight: 500; line-height: 32px; }
.info { width: 420px; margin-left: -.5px; font-size: 18px; line-height: 21px; }
.logo.small { width: auto; padding: 0; font-size: 48px; line-height: 78px; letter-spacing: .600px; -webkit-text-stroke: 1.300px; }
.ready { width: 330px; margin-top: 10px; }
.ask { margin-top: 40px; }
.whats { font-size: 24px; font-weight: 700; line-height: 28px; }
.rio { margin-top: 38px; }
.sp { margin-top: 33px; }
.mail { margin-top: 181px; color: #118a70; }
.copy { margin-top: 229px; }
.totop { position: absolute; left: 1753px; bottom: 40px; display: flex; align-items: center; justify-content: center; width: 40px; height: 40px; border-radius: 50%; background: #118a70; }
.chat { position: absolute; left: 1563px; bottom: 0; width: 260px; height: 40px; padding-left: 15px; border-radius: 5px 5px 0 0; background: #118a70; color: #fff; font: 16px/40px Lato, sans-serif; }
.scrollbar { display: flex; flex-direction: column; align-items: center; width: 15px; padding: 6px 0; background: #f1f1f1; }
.thumb { width: 11px; height: 123px; margin: auto 0 15px; background: #c1c1c1; }
```
